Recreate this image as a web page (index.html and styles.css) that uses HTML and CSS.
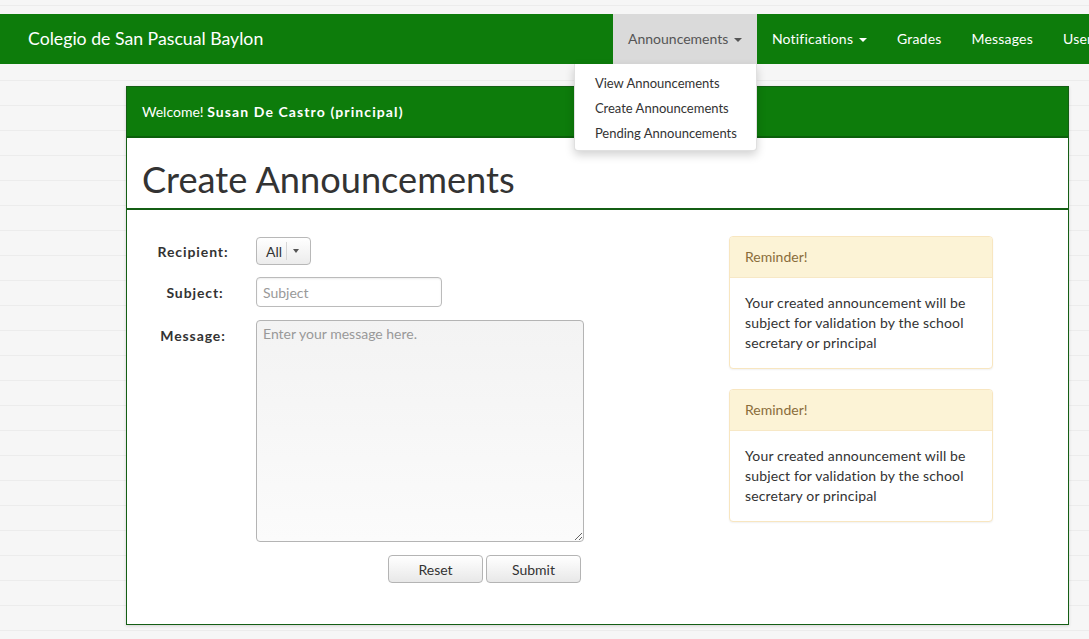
FILE: index.html
```html
<!DOCTYPE html>
<html>
<head>
<meta charset="utf-8">
<title>Create Announcements</title>
<link rel="stylesheet" href="styles.css">
</head>
<body>
<nav class="navbar">
  <div class="brand">Colegio de San Pascual Baylon</div>
  <ul class="nav">
    <li class="nav-item active dropdown">
      <a>Announcements <span class="caret"></span></a>
      <ul class="dropdown-menu">
        <li>View Announcements</li>
        <li>Create Announcements</li>
        <li>Pending Announcements</li>
      </ul>
    </li>
    <li class="nav-item"><a>Notifications <span class="caret"></span></a></li>
    <li class="nav-item"><a>Grades</a></li>
    <li class="nav-item"><a>Messages</a></li>
    <li class="nav-item"><a>Users</a></li>
  </ul>
</nav>

<div class="panel">
  <div class="panel-heading">Welcome! <strong>Susan De Castro (principal)</strong></div>
  <div class="page-title"><h1>Create Announcements</h1></div>
  <div class="panel-body">
    <form class="form">
      <div class="form-row">
        <label class="label">Recipient:</label>
        <div class="select-btn"><span class="sel-text">All</span><span class="sel-divider"></span><span class="sel-caret"></span></div>
      </div>
      <div class="form-row row-subject">
        <label class="label">Subject:</label>
        <input class="input" type="text" placeholder="Subject">
      </div>
      <div class="form-row row-message">
        <label class="label label-top">Message:</label>
        <textarea class="textarea" placeholder="Enter your message here."></textarea>
      </div>
      <div class="actions">
        <button type="button" class="btn btn-reset">Reset</button>
        <button type="button" class="btn btn-submit">Submit</button>
      </div>
    </form>
    <div class="reminders">
      <div class="reminder">
        <div class="reminder-heading">Reminder!</div>
        <div class="reminder-body">Your created announcement will be subject for validation by the school secretary or principal</div>
      </div>
      <div class="reminder">
        <div class="reminder-heading">Reminder!</div>
        <div class="reminder-body">Your created announcement will be subject for validation by the school secretary or principal</div>
      </div>
    </div>
  </div>
</div>
</body>
</html>
```

FILE: styles.css
```css
* { box-sizing: border-box; }
html, body { margin: 0; padding: 0; }
body {
  width: 1089px;
  height: 639px;
  overflow: hidden;
  font-family: Lato, "Open Sans", sans-serif;
  font-size: 14px;
  color: #333;
  background-color: #f6f6f6;
  background-image: repeating-linear-gradient(to bottom, transparent 0px, transparent 5px, #ececec 5px, #ececec 6px, transparent 6px, transparent 25px);
}

.navbar {
  margin-top: 14px;
  height: 50px;
  background: #0d7c0b;
  display: flex;
  position: relative;
  z-index: 5;
}
.brand {
  flex: 0 0 613px;
  padding-left: 28px;
  line-height: 50px;
  font-size: 17.7px;
  color: #fff;
}
.nav {
  display: flex;
  list-style: none;
  margin: 0;
  padding: 0;
  flex: none;
}
.nav-item {
  position: relative;
}
.nav-item > a {
  display: block;
  line-height: 50px;
  padding: 0 15px;
  color: #fff;
  white-space: nowrap;
  letter-spacing: 0.2px;
}
.nav-item.active > a {
  background: #dadada;
  color: #555;
  letter-spacing: 0;
}
.caret {
  display: inline-block;
  width: 0;
  height: 0;
  margin-left: 2px;
  vertical-align: middle;
  border-top: 4px solid;
  border-left: 4px solid transparent;
  border-right: 4px solid transparent;
}
.dropdown-menu {
  position: absolute;
  top: 50px;
  right: 0;
  width: 183px;
  margin: 0;
  padding: 7px 0 4px;
  list-style: none;
  background: #fff;
  border: 1px solid rgba(0,0,0,0.12);
  border-top: 0;
  border-radius: 0 0 4px 4px;
  box-shadow: 0 4px 10px rgba(0,0,0,0.18);
}
.dropdown-menu li {
  line-height: 25px;
  padding-left: 20px;
  font-size: 13px;
  color: #333;
  white-space: nowrap;
}

.panel {
  margin: 22px 0 0 126px;
  width: 943px;
  height: 539px;
  background: #fff;
  border: 1px solid #145e14;
  box-shadow: 0 1px 3px rgba(0,0,0,0.15);
}
.panel-heading {
  height: 51px;
  line-height: 49px;
  padding-left: 15px;
  background: #0d7c0b;
  border-bottom: 2px solid #0b600b;
  color: #fff;
}
.panel-heading strong {
  font-weight: 700;
  letter-spacing: 1.1px;
}
.page-title {
  height: 72px;
  border-bottom: 2px solid #145e14;
  padding-left: 15px;
}
.page-title h1 {
  margin: 0;
  font-size: 36.2px;
  font-weight: 400;
  line-height: 84px;
  color: #333;
  position: relative;
  top: -1px;
}
.panel-body {
  display: flex;
  padding: 26px 0 0 15px;
}
.form {
  width: 442px;
  padding-top: 1px;
}
.form-row {
  display: flex;
  align-items: center;
}
.label {
  width: 102px;
  margin-right: 12px;
  text-align: center;
  font-weight: 700;
  letter-spacing: 0.9px;
  color: #333;
}
.row-subject { margin-top: 12px; }
.row-subject .label { padding-left: 4px; }
.row-message {
  margin-top: 13px;
  align-items: flex-start;
}
.label-top {
  padding-top: 7px;
  margin-left: 0;
  margin-right: 12px;
}
.select-btn {
  display: flex;
  align-items: center;
  height: 28px;
  width: 55px;
  border: 1px solid #b8b8b8;
  border-radius: 4px;
  background: linear-gradient(to bottom, #fff, #ececec);
  padding-left: 9px;
}
.sel-text { font-size: 14px; color: #333; }
.sel-divider {
  width: 1px;
  height: 18px;
  margin-left: 4px;
  background: #d6d6d6;
}
.sel-caret {
  width: 0; height: 0;
  margin-left: 6px;
  border-top: 4px solid #555;
  border-left: 3px solid transparent;
  border-right: 3px solid transparent;
}
.input {
  width: 186px;
  height: 30px;
  padding: 0 6px;
  border: 1px solid #bbb;
  border-radius: 4px;
  font-family: Lato, sans-serif;
  font-size: 14px;
  color: #333;
  background: #fff;
  box-shadow: inset 0 1px 2px rgba(0,0,0,0.08);
  outline: none;
}
.input::placeholder, .textarea::placeholder { color: #999; }
.textarea {
  width: 328px;
  height: 222px;
  padding: 4px 6px;
  border: 1px solid #b4b4b4;
  border-radius: 4px;
  font-family: Lato, sans-serif;
  font-size: 14px;
  line-height: 18px;
  color: #333;
  background: linear-gradient(to bottom, #f3f3f3, #fbfbfb);
  resize: vertical;
  outline: none;
}
.actions {
  display: flex;
  justify-content: flex-end;
  gap: 3px;
  margin-top: 13px;
  padding-right: 3px;
}
.btn {
  height: 28px;
  border: 1px solid #b4b4b4;
  border-radius: 4px;
  background: linear-gradient(to bottom, #fff, #e8e8e8);
  font-family: Lato, sans-serif;
  font-size: 14px;
  color: #333;
  padding: 0;
}
.btn-reset { width: 95px; }
.btn-submit { width: 95px; }

.reminders {
  margin-left: 145px;
  width: 264px;
}
.reminder {
  border: 1px solid #f8e6c0;
  border-radius: 4px;
  background: #fff;
  box-shadow: 0 1px 2px rgba(0,0,0,0.06);
  margin-bottom: 20px;
}
.reminder-heading {
  height: 41px;
  line-height: 40px;
  padding-left: 15px;
  background: #fcf3d6;
  border-bottom: 1px solid #f7e8c6;
  border-radius: 3px 3px 0 0;
  color: #8a6d3b;
}
.reminder-body {
  padding: 15px;
  line-height: 20px;
  letter-spacing: 0.15px;
  color: #333;
}
```
